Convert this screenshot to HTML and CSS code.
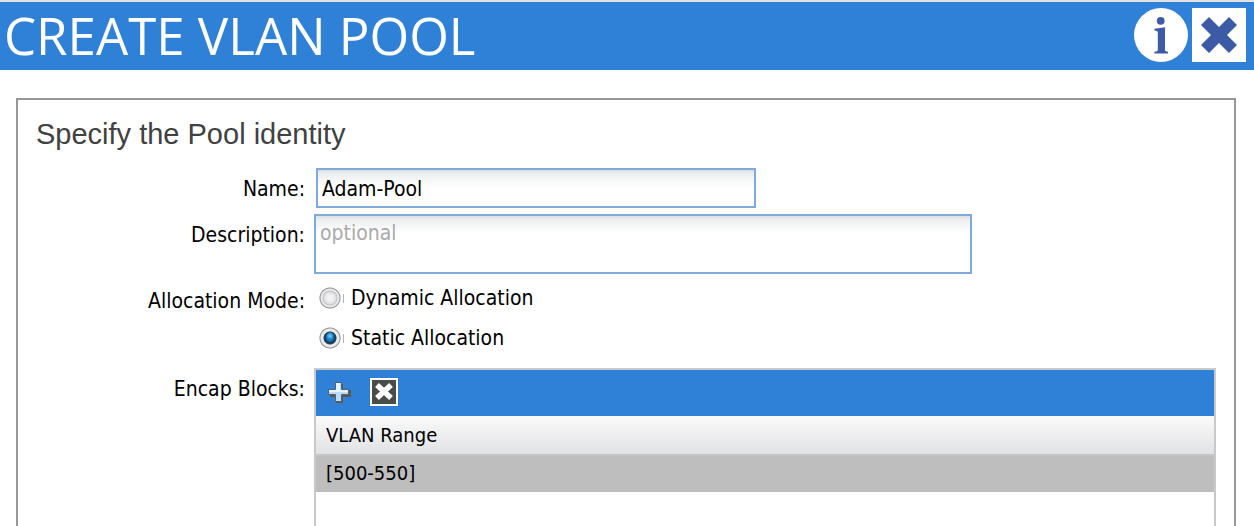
FILE: index.html
```html
<!DOCTYPE html>
<html lang="en">
<head>
<meta charset="utf-8">
<title>Create VLAN Pool</title>
<link rel="stylesheet" href="styles.css">
</head>
<body>
<header class="titlebar">
  <h1 class="title">CREATE VLAN POOL</h1>
  <div class="title-actions">
    <button class="icon-button" type="button" aria-label="Help">
      <svg width="54" height="54" viewBox="0 0 54 54" aria-hidden="true">
        <circle cx="27" cy="27" r="27" fill="#fff"/>
        <circle cx="26.7" cy="12.8" r="3.9" fill="#3c5ba6"/>
        <path d="M20.5 20.8 31 19.3V41.5c0 1.7.8 2 3 2.3v1.7H20.4v-1.7c2.6-.3 3.4-.6 3.4-2.3V25c0-1.8-.5-2.3-3.3-2.3z" fill="#3c5ba6"/>
      </svg>
    </button>
    <button class="icon-button" type="button" aria-label="Close">
      <svg width="54" height="54" viewBox="0 0 54 54" aria-hidden="true">
        <path d="M0 0h54v54H0z" fill="#fff"/>
        <path d="M17 9 27 19 37 9 45 17 35 27 45 37 37 45 27 35 17 45 9 37 19 27 9 17z" fill="#3c5ba6"/>
      </svg>
    </button>
  </div>
</header>
<main class="panel">
  <h2 class="panel-title">Specify the Pool identity</h2>
  <form class="form">
    <label class="label" for="name">Name:</label>
    <input class="field field-name" id="name" type="text" value="Adam-Pool">
    <label class="label" for="description">Description:</label>
    <textarea class="field field-description" id="description" placeholder="optional"></textarea>
    <span class="label label-mode" id="mode-label">Allocation Mode:</span>
    <div class="options" role="radiogroup" aria-labelledby="mode-label">
      <label class="option"><input class="radio" type="radio" name="mode" value="dynamic">Dynamic Allocation</label>
      <label class="option"><input class="radio" type="radio" name="mode" value="static" checked>Static Allocation</label>
    </div>
    <span class="label" id="blocks-label">Encap Blocks:</span>
    <section class="blocks" aria-labelledby="blocks-label">
      <div class="toolbar">
        <button class="icon-button" type="button" aria-label="Add block">
          <svg width="26" height="28" viewBox="0 0 26 28" aria-hidden="true">
            <path d="M11 6h6v6h8v7h-8v6h-7v-6H4v-7h7z" fill="#5c564b"/>
            <path d="M9.500 4.500h6v7h7v5h-7v7h-6v-7h-7v-5h7z" fill="#b9dcfb" stroke="#52606c"/>
            <path d="M10 5h4v7h8v2H3v-2h7z" fill="#e4f3ff"/>
          </svg>
        </button>
        <button class="icon-button" type="button" aria-label="Delete block">
          <svg width="28" height="28" viewBox="0 0 28 28" aria-hidden="true">
            <path d="M0 0h28v28H0z" fill="#fff"/>
            <path d="M2 2h24v24H2z" fill="#4b4b4b"/>
            <path d="m7 7 14 13m0-13-14 13" stroke="#fff" stroke-width="5.500"/>
          </svg>
        </button>
      </div>
      <table class="table">
        <thead><tr><th scope="col">VLAN Range</th></tr></thead>
        <tbody><tr><td>[500-550]</td></tr></tbody>
      </table>
    </section>
  </form>
</main>
</body>
</html>
```
FILE: styles.css
```css
* { box-sizing: border-box; }

body {
  display: flex;
  flex-direction: column;
  height: 100vh;
  margin: 0;
  overflow: hidden;
  background: #fff;
  color: #000;
  font: 21px/28px "DejaVu Sans Condensed", "Noto Sans", sans-serif;
}

.titlebar {
  display: flex;
  flex: none;
  align-items: center;
  justify-content: space-between;
  height: 70px;
  padding: 0 8px 2px 4px;
  border-top: 2px solid #dfe1e5;
  background: #2f80d7;
}

.title {
  margin: 0;
  color: #fff;
  font: 400 51px/66px "Open Sans", sans-serif;
}

.title-actions { display: flex; gap: 4px; }

.icon-button {
  display: block;
  padding: 0;
  border: 0;
  background: none;
  cursor: pointer;
}

.icon-button svg { display: block; }

.panel {
  display: flex;
  flex: 1;
  flex-direction: column;
  min-height: 0;
  margin: 28px 18px 0 16px;
  padding: 16px 18px 0;
  border: 2px solid #979797;
  border-bottom: 0;
}

.panel-title {
  margin: 0 0 16px;
  color: #414141;
  font: 400 29px/36px "Liberation Sans", Arial, sans-serif;
}

.form {
  display: grid;
  flex: 1;
  grid-template-columns: 269px minmax(0, 1fr);
  grid-template-rows: auto auto auto 1fr;
  column-gap: 9px;
}

.label {
  padding-top: 7px;
  text-align: right;
}

.label-mode { padding-top: 9px; }

.field {
  max-width: 100%;
  border: 2px solid #7eabd9;
  background: #fff linear-gradient(#d8dee2, #eef0f0 4px, #fff 18px) no-repeat;
  color: #000;
  font: inherit;
  outline: 0;
}

.field::placeholder { color: #aaa; opacity: 1; }

.field-name {
  width: 440px;
  height: 40px;
  margin: 0 0 6px 2px;
  padding: 2px 4px 0;
}

.field-description {
  display: block;
  width: 658px;
  height: 60px;
  margin-bottom: 4px;
  padding: 3px 4px;
  resize: none;
}

.options { padding-bottom: 10px; }

.option {
  display: flex;
  gap: 6px;
  align-items: center;
  height: 40px;
  padding-left: 5px;
}

.radio {
  width: 26px;
  height: 22px;
  margin: 0;
  appearance: none;
  background:
    radial-gradient(circle at 11px 11px, #f1f1f1 0 3px, #dcdde0 6px, #bfc1c5 7px, #ebebeb 8px 9px, #8e8e8e 10px, transparent 11px),
    linear-gradient(#a9b8c4, #a9b8c4) 24px 7px / 1px 9px no-repeat;
}

.radio:checked {
  background:
    radial-gradient(circle at 11px 9px, #79d0ff 0, #218bd0 3px, transparent 4px),
    radial-gradient(circle at 11px 11px, #1976b8 0 3px, #123657 5px, #31465a 6px, #ebebeb 7px 9px, #8e8e8e 10px, transparent 11px),
    linear-gradient(#a9b8c4, #a9b8c4) 24px 7px / 1px 9px no-repeat;
}

.blocks {
  border: 2px solid #c9c9c9;
  border-bottom: 0;
}

.toolbar {
  display: flex;
  gap: 18px;
  align-items: center;
  height: 46px;
  padding: 0 10px 2px;
  background: #2f80d7;
}

.table {
  width: 100%;
  border-collapse: collapse;
  font-size: 20px;
}

.table th,
.table td {
  padding: 4px 10px;
  font-weight: 400;
  text-align: left;
}

.table th {
  height: 38px;
  background: linear-gradient(#fafafa, #e1e2e4);
}

.table td {
  height: 38px;
  background: linear-gradient(#c5c5c5 2px, #bebebe 2px);
}
```
